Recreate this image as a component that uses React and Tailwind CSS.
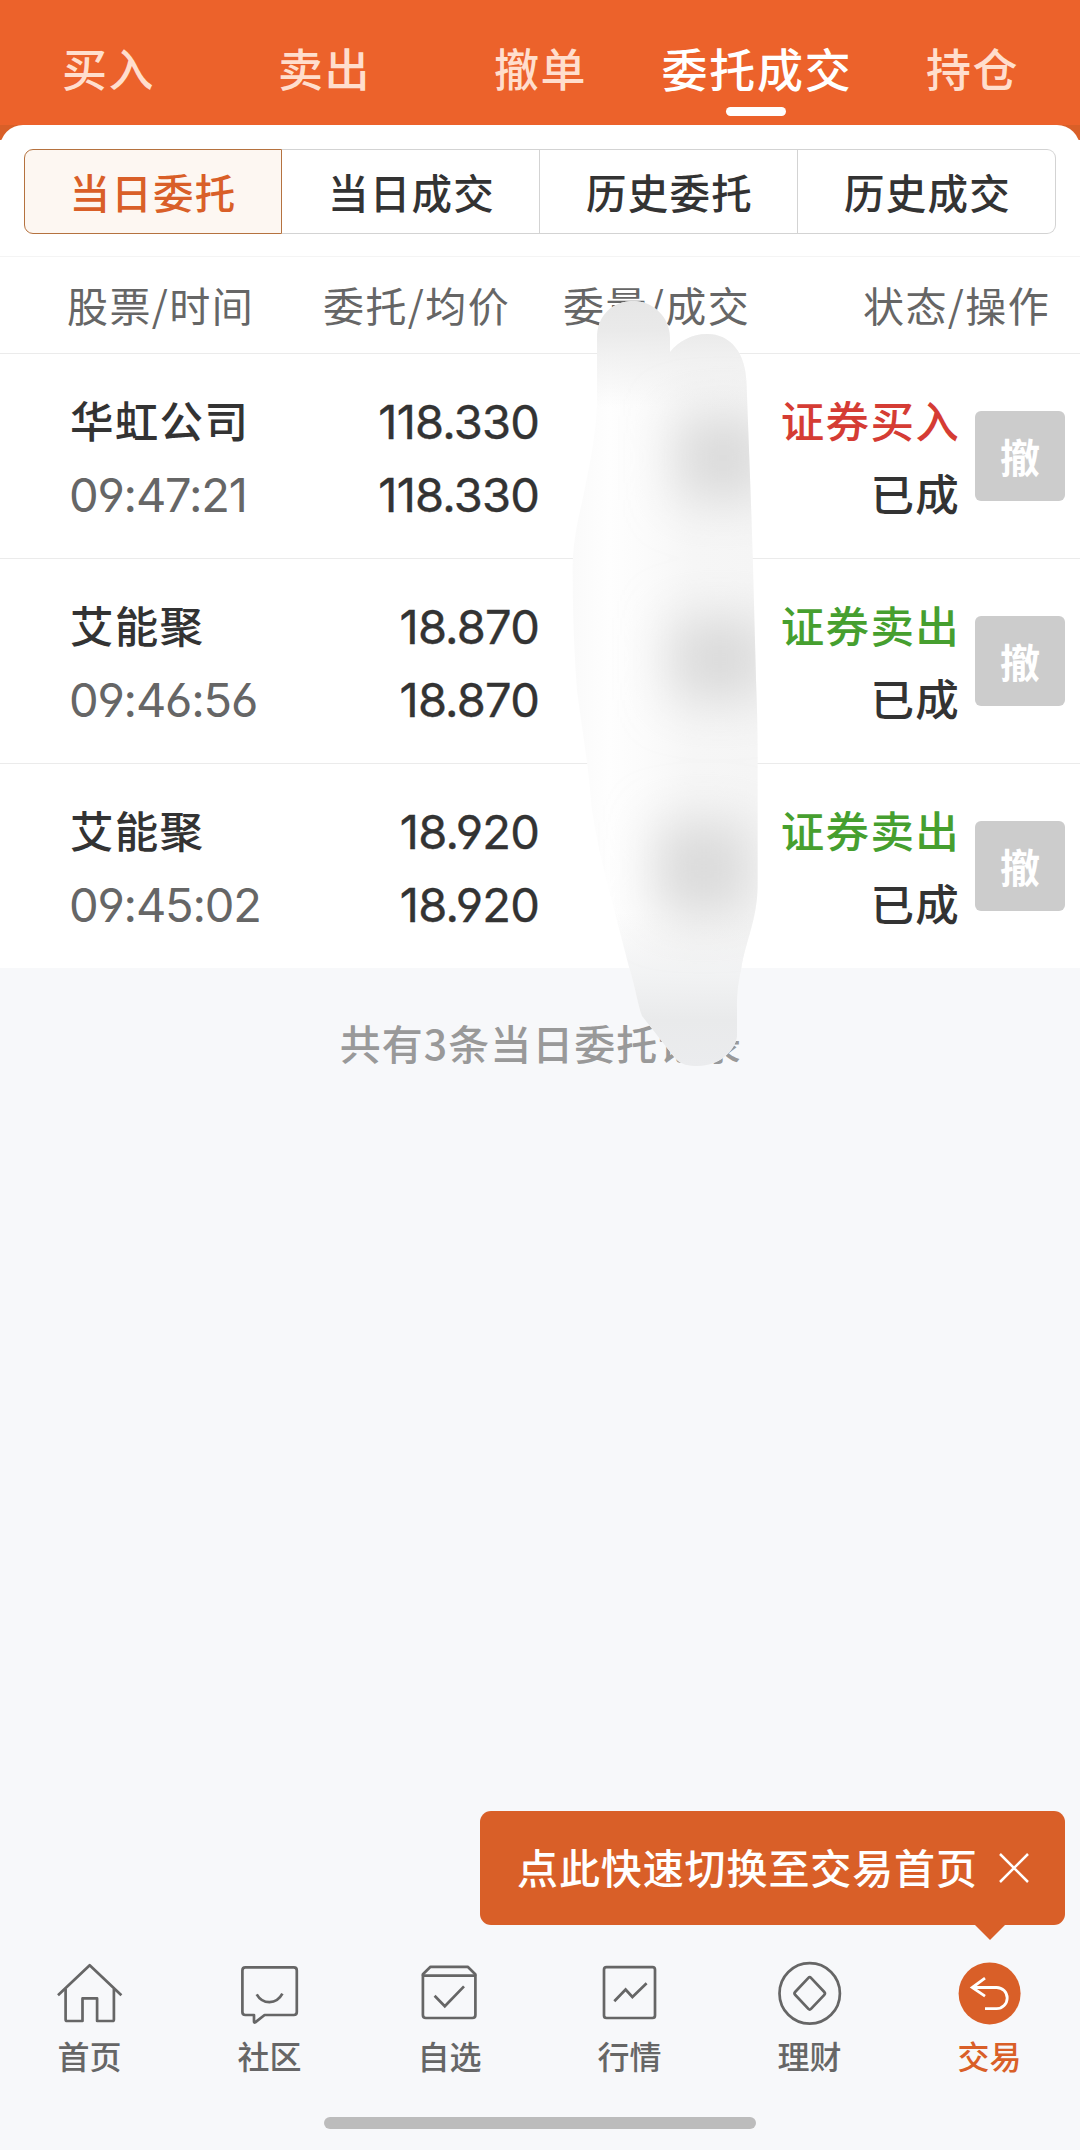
const TABS = ['买入', '卖出', '撤单', '委托成交', '持仓'];
const SUB_TABS = ['当日委托', '当日成交', '历史委托', '历史成交'];

const ORDERS = [
  { name: '华虹公司', time: '09:47:21', price: '118.330', avg: '118.330', side: 'buy', status: '已成' },
  { name: '艾能聚', time: '09:46:56', price: '18.870', avg: '18.870', side: 'sell', status: '已成' },
  { name: '艾能聚', time: '09:45:02', price: '18.920', avg: '18.920', side: 'sell', status: '已成' },
];

const NAV = [
  { label: '首页', Icon: HomeIcon },
  { label: '社区', Icon: ChatIcon },
  { label: '自选', Icon: BoxIcon },
  { label: '行情', Icon: ChartIcon },
  { label: '理财', Icon: WealthIcon },
  { label: '交易', Icon: TradeIcon, active: true },
];

function Line({ children }) {
  return (
    <svg
      className="w-[66px] h-[66px]"
      viewBox="0 0 66 66"
      fill="none"
      stroke="#666"
      strokeWidth="2.7"
      strokeLinejoin="round"
    >
      {children}
    </svg>
  );
}

function HomeIcon() {
  return (
    <Line>
      <path d="M1 35.3 32.7 5.2 64.4 35.3" />
      <path d="M8.6 29v30.4q0 1.6 1.6 1.6h15.3V38.4h14.6V61h15.2q1.6 0 1.6-1.6V29" />
    </Line>
  );
}

function ChatIcon() {
  return (
    <Line>
      <path d="M8.4 7.4h48.4q3 0 3 3V52q0 3-3 3H27.6l-9.4 7.4q-1.2.6-1.2-.8V55H8.4q-3 0-3-3V10.4q0-3 3-3z" />
      <path d="M19.7 34.3c6 10.4 19.7 10.6 25.7-.6" />
    </Line>
  );
}

function BoxIcon() {
  return (
    <Line>
      <path d="M5.9 15.7V55q0 3 3 3h46.5q3 0 3-3V15.7z" />
      <path d="M5.9 15.7v-1.5l7.6-7.4h37.2l7.6 7.4v1.5" />
      <path d="M17.6 35.8l10.2 10.4L47 26.4" strokeLinejoin="miter" />
    </Line>
  );
}

function ChartIcon() {
  return (
    <Line>
      <rect x="7" y="7.2" width="51" height="50.8" rx="2.5" />
      <path d="M17.3 41.3 28.6 29.5l6.8 7.5 14.2-13.7" strokeLinejoin="miter" />
    </Line>
  );
}

function WealthIcon() {
  return (
    <Line>
      <circle cx="32.7" cy="33.4" r="30.2" />
      <path d="M34 17.9 47.3 32q1.3 1.4 0 2.8L34 48.9q-1.3 1.4-2.6 0L18.1 34.8q-1.3-1.4 0-2.8l13.3-14.1q1.3-1.4 2.6 0z" />
    </Line>
  );
}

function TradeIcon() {
  return (
    <svg className="w-[66px] h-[66px]" viewBox="0 0 66 66" fill="none">
      <circle cx="32.6" cy="33.4" r="31" fill="#d95f28" />
      <path
        d="M28 18.2 15.2 27.5 28 36.2M15.2 27.5h24.4a10.6 10.6 0 0 1 0 21.2H28"
        stroke="#fff"
        strokeWidth="2.8"
      />
    </svg>
  );
}

// Smudge hiding the quantity column
function Smudge() {
  return (
    <svg
      className="absolute left-[560px] top-[290px] w-[210px] h-[790px]"
      viewBox="560 290 210 790"
      aria-hidden="true"
    >
      <defs>
        <linearGradient id="base" x1="572" x2="758" y1="0" y2="0" gradientUnits="userSpaceOnUse">
          <stop offset="0" stopColor="#fafafa" />
          <stop offset=".2" stopColor="#fefefe" />
          <stop offset=".4" stopColor="#fbfbfb" />
          <stop offset=".65" stopColor="#f6f6f6" />
          <stop offset="1" stopColor="#f5f5f5" />
        </linearGradient>
        <linearGradient id="ends" x1="0" x2="0" y1="300" y2="1066" gradientUnits="userSpaceOnUse">
          <stop offset="0" stopColor="#e6e6e6" />
          <stop offset=".04" stopColor="#e9e9e9" stopOpacity=".95" />
          <stop offset=".08" stopColor="#f0f0f0" stopOpacity=".8" />
          <stop offset=".14" stopColor="#f0f0f0" stopOpacity="0" />
          <stop offset=".8" stopColor="#f0f0f0" stopOpacity="0" />
          <stop offset=".88" stopColor="#f1f2f3" stopOpacity=".9" />
          <stop offset=".94" stopColor="#e9eaeb" />
          <stop offset="1" stopColor="#ebecee" />
        </linearGradient>
        <filter id="soft" x="-100%" y="-100%" width="300%" height="300%">
          <feGaussianBlur stdDeviation="25" />
        </filter>
        <clipPath id="shape">
          <path d="M597 338C597 315 613 301 633 301S670 317 670 338V352C679 341 692 334 707 334C730 334 746 352 746.6 385C749 450 751 500 752.8 558L756 680Q758 730 757.6 773V887C757 920 746 940 741.5 967C738 985 737 990 737 1010V1036C735 1052 718 1066 698 1066C689 1066 681 1065 675 1058L642 1016C638 1006 636 990 629 967L609 890C600 855 596 835 591.6 807C588 760 582 730 577 690C574 650 572.5 610 572.7 563C574 530 581 510 586.5 480Q597 430 597 400Z" />
        </clipPath>
      </defs>
      <g clipPath="url(#shape)">
        <rect x="560" y="290" width="210" height="790" fill="url(#base)" />
        <rect x="560" y="290" width="210" height="790" fill="url(#ends)" />
        <g fill="#dadada" filter="url(#soft)">
          <rect x="678" y="416" width="90" height="84" />
          <rect x="672" y="618" width="96" height="82" />
          <rect x="658" y="822" width="92" height="92" />
        </g>
      </g>
    </svg>
  );
}

function OrderRow({ order }) {
  const buy = order.side === 'buy';
  return (
    <div className="h-[205px] border-t border-[#ebebeb] flex text-[43.5px] tracking-[1.3px] leading-[73px] text-[#333]">
      <div className="w-[330px] pl-[70px] pt-[29px]">
        <p>{order.name}</p>
        <p className="pt-[2px] -ml-px text-[#666] font-normal tracking-[-1.2px] text-[47px] font-['Inter','Noto_Sans_CJK_SC',sans-serif] [font-feature-settings:'cv03','cv04']">
          {order.time}
        </p>
      </div>
      <div className="w-[209px] pt-[31px] text-right text-[47px] font-normal [-webkit-text-stroke:0.4px_#333] tracking-[-0.8px] font-['Inter','Noto_Sans_CJK_SC',sans-serif] [font-feature-settings:'cv03','cv04']">
        <p>{order.price}</p>
        <p>{order.avg}</p>
      </div>
      <div className="ml-auto pt-[29px] text-right">
        <p className={buy ? 'text-[#d53c34]' : 'text-[#469f2f]'}>{buy ? '证券买入' : '证券卖出'}</p>
        <p>{order.status}</p>
      </div>
      <button
        type="button"
        className="ml-[15px] mr-[15px] mt-[57px] w-[90px] h-[90px] rounded-[6px] bg-[#ccc] text-white text-[40px] tracking-normal leading-[90px] font-bold"
      >
        撤
      </button>
    </div>
  );
}

export default function App() {
  return (
    <div className="relative w-[1080px] h-[2150px] flex flex-col bg-[#f7f8fa] overflow-hidden font-medium font-['Noto_Sans_CJK_SC',sans-serif]">
      <header className="h-[125px] shrink-0 bg-[#ec622b] grid grid-cols-5">
        {TABS.map((tab) => {
          const active = tab === '委托成交';
          return (
            <div key={tab} className="flex flex-col items-center pt-[35px]">
              <span
                className={
                  active
                    ? 'text-white text-[46px] tracking-[1.8px] leading-[64px] pl-[2px] whitespace-nowrap'
                    : 'text-[#ffdecd] text-[45px] tracking-[1.5px] leading-[66px] pl-px whitespace-nowrap'
                }
              >
                {tab}
              </span>
              {active && <span className="mt-[8px] w-[60px] h-[9px] rounded-full bg-white" />}
            </div>
          );
        })}
      </header>

      <main className="shrink-0 bg-[linear-gradient(#d95f28_15px,#fff_15px)]">
        <div className="bg-white rounded-t-[23px] pt-6 px-6 h-[131px]">
          <div className="grid grid-cols-4 h-[84px] text-[40.5px] tracking-[1.3px] leading-[83px] text-center text-[#333]">
            {SUB_TABS.map((tab, i) => (
              <div
                key={tab}
                className={
                  i === 0
                    ? 'border border-[#b5723f] bg-[#fdf7f2] text-[#d95f28] rounded-l-[9px]'
                    : i === 3
                      ? 'border border-l-0 border-[#d3d3d3] rounded-r-[9px] pl-[2px]'
                      : 'border border-l-0 border-[#d3d3d3] pl-[2px]'
                }
              >
                {tab}
              </div>
            ))}
          </div>
        </div>

        <div className="h-[97px] border-t border-[#f4f4f4] bg-white flex text-[41px] tracking-[1.4px] leading-[95px] text-[#666] whitespace-nowrap font-normal">
          <span className="w-[256px] ml-[67px]">股票/时间</span>
          <span className="w-[240px]">委托/均价</span>
          <span className="w-[300px]">委量/成交</span>
          <span>状态/操作</span>
        </div>

        <div className="bg-white">
          {ORDERS.map((order) => (
            <OrderRow key={order.time} order={order} />
          ))}
        </div>
      </main>

      <p className="mt-[44px] pl-[2px] text-center text-[41px] tracking-[1px] leading-[60px] text-[#999]">
        共有3条当日委托记录
      </p>

      <Smudge />

      <div className="mt-auto ml-[480px] mr-[15px] h-[114px] shrink-0 relative rounded-[11px] bg-[#d95f28] flex items-center pl-[37px] text-white text-[41px] tracking-[0.9px]">
        <span className="w-[463px] leading-[60px] -mt-[4px] whitespace-nowrap">点此快速切换至交易首页</span>
        <svg className="ml-[18px] w-8 h-8" viewBox="0 0 32 32" stroke="#fff" strokeWidth="2.5">
          <path d="M2 2 30 30M30 2 2 30" />
        </svg>
        <svg className="absolute top-full right-[60px] w-[30px] h-[15px]" viewBox="0 0 30 15">
          <path d="M0 0h30L15 15z" fill="#d95f28" />
        </svg>
      </div>

      <nav className="mt-[35px] h-[157px] shrink-0 grid grid-cols-6">
        {NAV.map(({ label, Icon, active }) => (
          <div key={label} className="flex flex-col items-center">
            <Icon />
            <span
              className={
                active
                  ? 'mt-[7px] pr-px text-[32px] leading-[44px] text-[#d95f28]'
                  : 'mt-[7px] pr-px text-[32px] leading-[44px] text-[#666]'
              }
            >
              {label}
            </span>
          </div>
        ))}
      </nav>
      <div className="mx-auto mb-[21px] w-[432px] h-3 shrink-0 rounded-full bg-[#bcbcbc]" />
    </div>
  );
}
